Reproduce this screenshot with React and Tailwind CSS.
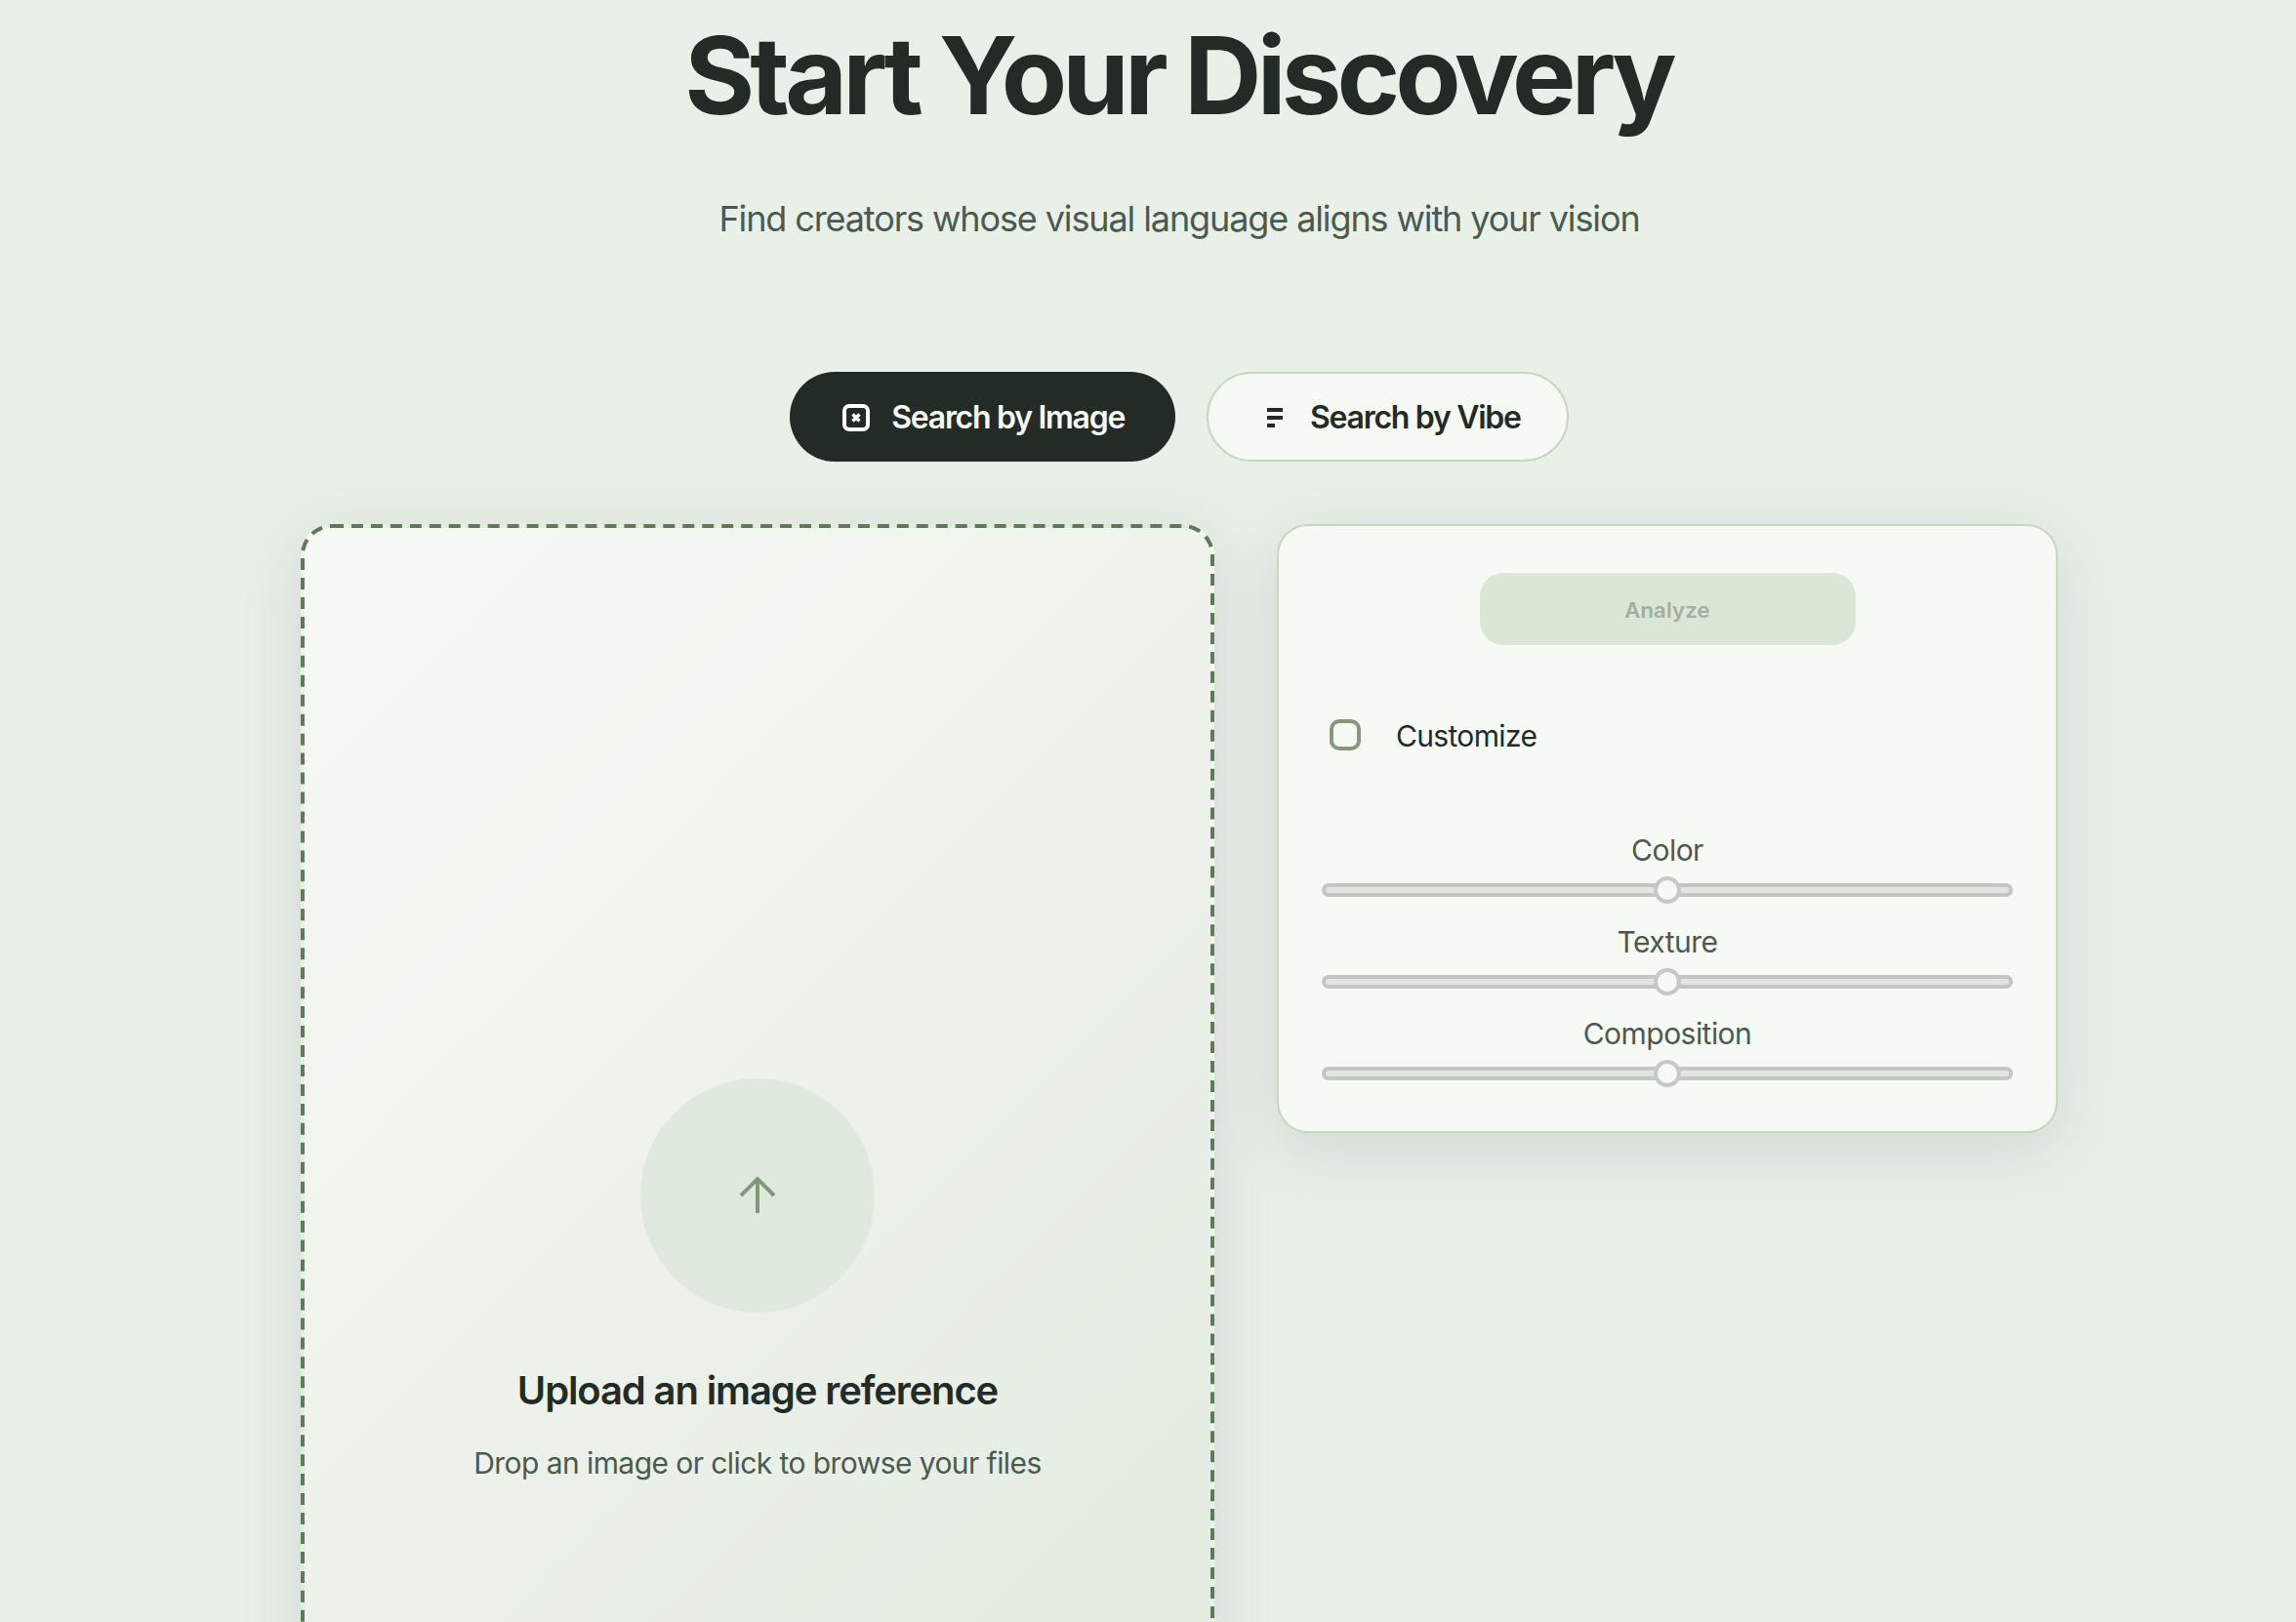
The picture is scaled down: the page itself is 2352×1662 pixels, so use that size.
import React from "react";

function Slider({ label }) {
  return (
    <div className="flex flex-col items-center">
      <div className="h-[36px] pt-[2px] text-[30px] leading-[36px] tracking-[-0.018em] text-[#4a5a4e]">{label}</div>
      <div className="relative mt-[18px] w-full h-[14px] rounded-full border-[4px] border-[#c5c5c5] bg-[#dfe8dd]">
        <div className="absolute left-1/2 top-1/2 -translate-x-1/2 -translate-y-1/2 w-[28px] h-[28px] rounded-full border-[4px] border-[#c8c8c8] bg-[#f7f9f4]" />
      </div>
    </div>
  );
}

export default function App() {
  return (
    <div className="h-[1662px] overflow-hidden bg-[#e9f0e8] pl-[64px] font-['Inter',sans-serif] text-[#232b26]">
      <div className="mx-auto w-[1800px] flex flex-col items-center">
        <h1 className="mt-[10px] pr-[2px] text-[110px] leading-[134px] font-bold tracking-[-0.044em] text-[#232b26]">Start Your Discovery</h1>
        <p className="mt-[58px] text-[36px] leading-[44px] tracking-[-0.031em] text-[#4a5a4e]">Find creators whose visual language aligns with your vision</p>
        <div className="mt-[135px] flex gap-[32px]">
          <button className="flex h-[92px] items-center gap-[16px] rounded-full bg-[#232b26] pl-[48px] pr-[52px] text-[32px] font-semibold tracking-[-0.04em] text-[#f7f9f4]">
            <span className="mt-[2px] flex h-[40px] w-[40px] items-center justify-center">
              <svg width="28" height="28" viewBox="0 0 28 28" fill="none">
                <rect x="2" y="2" width="24" height="24" rx="5" stroke="#ffffff" strokeWidth="4" />
                <path d="M10.5 10.5l7 7M17.5 10.5l-7 7" stroke="#ffffff" strokeWidth="3.5" />
              </svg>
            </span>
            <span className="pt-[2px]">Search by Image</span>
          </button>
          <button className="flex h-[92px] items-center gap-[16px] rounded-full border-2 border-[#c5d9bc] bg-[#f7f9f4] pl-[48px] pr-[47px] text-[32px] font-semibold tracking-[-0.04em] text-[#232b26]">
            <span className="mt-[2px] flex h-[40px] w-[40px] items-center justify-center">
              <svg width="16" height="20" viewBox="0 0 16 20" fill="#232b26">
                <rect x="0" y="0" width="16" height="4" />
                <rect x="0" y="8" width="16" height="4" />
                <rect x="0" y="16" width="8" height="4" />
              </svg>
            </span>
            <span className="pt-[2px]">Search by Vibe</span>
          </button>
        </div>
        <div className="mt-[64px] flex w-full items-start gap-[64px]">
          <div className="relative flex h-[1554px] w-[936px] flex-col items-center justify-center rounded-[32px] border-[4px] border-transparent bg-[linear-gradient(135deg,#f7f9f4,#dfe9dd)] shadow-[0_16px_64px_rgba(35,43,38,0.12)]">
            <div className="pointer-events-none absolute left-[-4px] top-[-4px] h-[777px] w-[468px] origin-top-left scale-200 rounded-[16px] border-2 border-dashed border-[#5f7a56]" />
            <div className="flex h-[240px] w-[240px] items-center justify-center rounded-full bg-[#dfe9dd]">
              <svg width="48" height="48" viewBox="0 0 48 48" fill="none" stroke="#7f9a76" strokeWidth="4">
                <path d="M24 42V8" />
                <path d="M7 24L24 7L41 24" />
              </svg>
            </div>
            <h3 className="mt-[56px] text-[40px] leading-[48px] font-semibold tracking-[-0.028em] text-[#232b26]">Upload an image reference</h3>
            <p className="mt-[26px] text-[30px] leading-[48px] tracking-[-0.019em] text-[#4a5a4e]">Drop an image or click to browse your files</p>
          </div>
          <div className="w-[800px] rounded-[32px] border-2 border-[#c5d9bc] bg-[#f7f9f4] px-[44px] pt-[48px] pb-[52px] shadow-[0_16px_64px_rgba(35,43,38,0.12)]">
            <button className="mx-auto flex h-[74px] w-[385px] items-center justify-center rounded-[24px] bg-[#dae6d6] pt-[2px] text-[22px] font-semibold tracking-[0.01em] text-[#a3ada3]">Analyze</button>
            <div className="mt-[76px] flex items-center gap-[36px] pl-[8px] h-[32px]">
              <span className="h-[32px] w-[32px] rounded-[10px] border-[4px] border-[#84997a]" />
              <span className="pt-[2px] text-[30px] leading-[36px] tracking-[-0.022em] text-[#232b26]">Customize</span>
            </div>
            <div className="mt-[82px] flex flex-col gap-[26px]">
              <Slider label="Color" />
              <Slider label="Texture" />
              <Slider label="Composition" />
            </div>
          </div>
        </div>
      </div>
    </div>
  );
}
